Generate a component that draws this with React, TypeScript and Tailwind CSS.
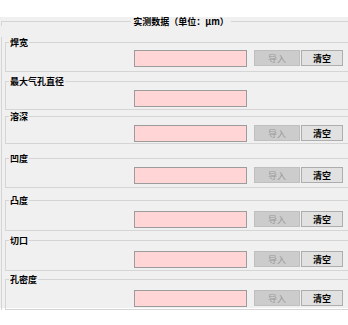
import React from "react";

type G = { label: string; mt: string; pt: string; pb: string; buttons: boolean };

const groups: G[] = [
  { label: "焊宽", mt: "mt-[11px]", pt: "pt-[3px]", pb: "pb-[4px]", buttons: true },
  { label: "最大气孔直径", mt: "mt-[4px]", pt: "pt-[4px]", pb: "pb-[2px]", buttons: false },
  { label: "溶深", mt: "mt-[1px]", pt: "pt-[4px]", pb: "pb-[1px]", buttons: true },
  { label: "凹度", mt: "mt-[9px]", pt: "pt-[4px]", pb: "pb-[3px]", buttons: true },
  { label: "凸度", mt: "mt-[7px]", pt: "pt-[6px]", pb: "pb-[2px]", buttons: true },
  { label: "切口", mt: "mt-[4px]", pt: "pt-[6px]", pb: "pb-[2px]", buttons: true },
  { label: "孔密度", mt: "mt-[3px]", pt: "pt-[6px]", pb: "pb-[2px]", buttons: true },
];

function Group({ g }: { g: G }) {
  return (
    <div className={g.mt}>
      <div className="flex h-[10px] items-center">
        <div className="h-[5px] w-[4px] self-end border-l border-t border-[#d5d5d5]" />
        <span className="px-[1px] text-[9px] leading-none font-semibold text-black">{g.label}</span>
        <div className="flex-1 border-t border-[#d5d5d5]" />
      </div>
      <div className={`flex items-start border-b border-l border-[#d5d5d5] ${g.pt} ${g.pb}`}>
        <div className="ml-[128px] h-[17px] w-[113px] border border-[#9c9c9c] bg-[#ffd5d5]" />
        {g.buttons && (
          <div className="ml-[7px] flex">
            <div className="flex h-[16px] w-[46px] items-center justify-center border border-[#bfbfbf] bg-[#cccccc] text-[9px] leading-none text-[#9a9a9a]">
              导入
            </div>
            <div className="ml-[1px] flex h-[16px] w-[42px] items-center justify-center border border-[#adadad] bg-[#e1e1e1] text-[9px] leading-none font-semibold text-black">
              清空
            </div>
          </div>
        )}
      </div>
    </div>
  );
}

export default function App() {
  return (
    <div
      className="h-[325px] w-[348px] overflow-hidden bg-white"
      style={{ fontFamily: '"Noto Sans CJK SC", "Noto Sans", sans-serif' }}
    >
      <div className="mt-[17px] h-[291px] w-[360px] bg-[#f0f0f0]">
        <div className="flex h-[9px] items-center pl-[1px]">
          <div className="h-[5px] flex-1 self-end border-l border-t border-[#d5d5d5]" />
          <span className="px-[2px] text-[9px] leading-none font-semibold text-black">实测数据（单位：μm）</span>
          <div className="flex-1 border-t border-[#d5d5d5]" />
        </div>
        <div className="ml-[1px] border-l border-[#d5d5d5] pl-[3px]">
          {groups.map((g) => (
            <Group key={g.label} g={g} />
          ))}
        </div>
      </div>
    </div>
  );
}
